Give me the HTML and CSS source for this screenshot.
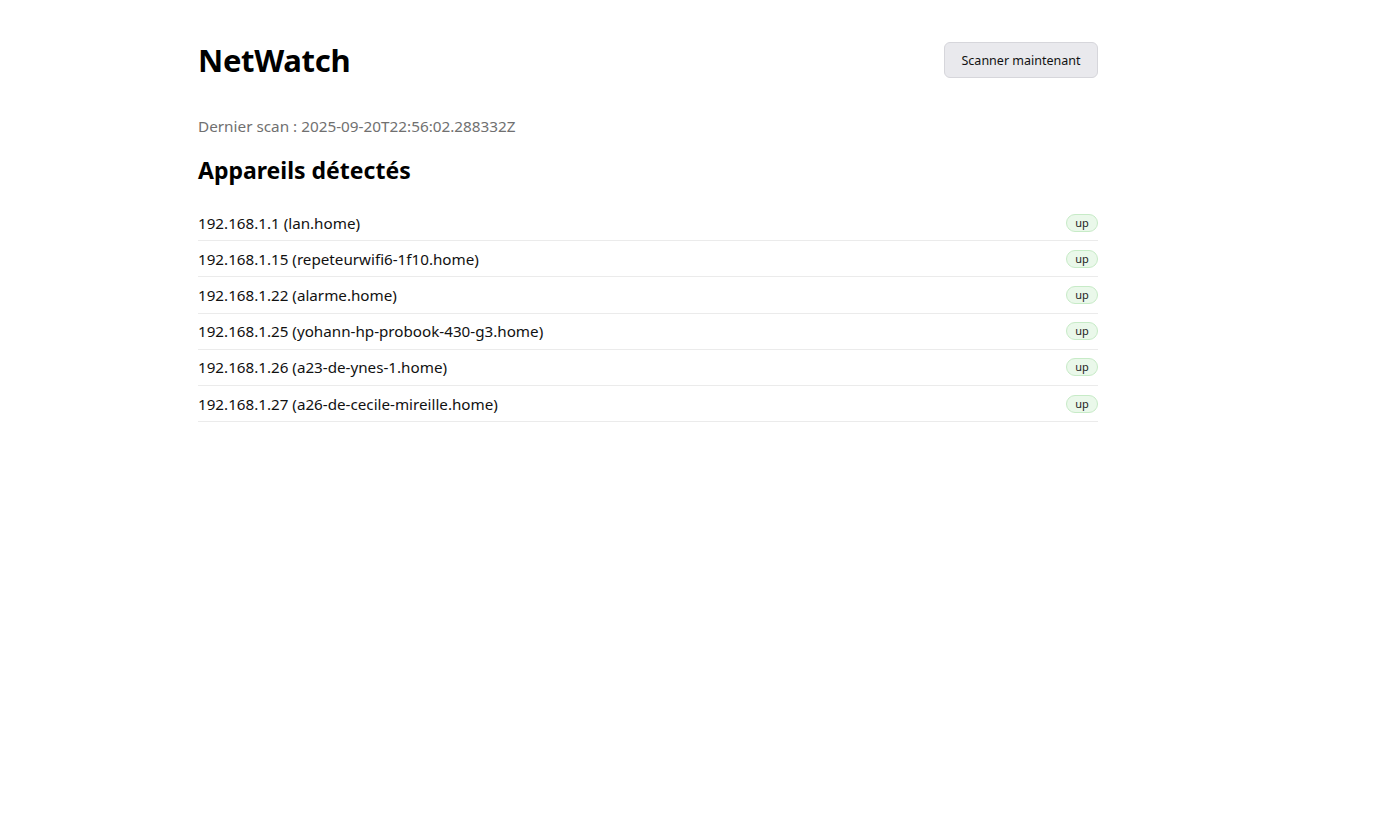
FILE: index.html
```html
<!DOCTYPE html>
<html lang="fr">
<head>
<meta charset="utf-8">
<title>NetWatch</title>
<link rel="stylesheet" href="styles.css">
</head>
<body>
<main class="wrap">
  <header class="top">
    <h1 class="title">NetWatch</h1>
    <button class="scan-btn">Scanner maintenant</button>
  </header>
  <p class="last-scan">Dernier scan : 2025-09-20T22:56:02.288332Z</p>
  <h2 class="subtitle">Appareils détectés</h2>
  <ul class="devices">
    <li class="device"><span>192.168.1.1 (lan.home)</span><span class="badge">up</span></li>
    <li class="device"><span>192.168.1.15 (repeteurwifi6-1f10.home)</span><span class="badge">up</span></li>
    <li class="device"><span>192.168.1.22 (alarme.home)</span><span class="badge">up</span></li>
    <li class="device"><span>192.168.1.25 (yohann-hp-probook-430-g3.home)</span><span class="badge">up</span></li>
    <li class="device"><span>192.168.1.26 (a23-de-ynes-1.home)</span><span class="badge">up</span></li>
    <li class="device"><span>192.168.1.27 (a26-de-cecile-mireille.home)</span><span class="badge">up</span></li>
  </ul>
</main>
</body>
</html>
```
FILE: styles.css
```css
html, body {
  margin: 0;
  padding: 0;
  background: #fff;
}
body {
  font-family: "Noto Sans", "Open Sans", sans-serif;
  color: #111;
}
.wrap {
  width: 900px;
  margin-left: 198px;
  padding-top: 42px;
}
.top {
  display: flex;
  justify-content: space-between;
  align-items: center;
  height: 36px;
}
.title {
  margin: 0;
  font-size: 31px;
  font-weight: 700;
  letter-spacing: -0.3px;
  color: #000;
}
.scan-btn {
  height: 36px;
  width: 154px;
  padding: 0;
  border: 1px solid #d6d6db;
  border-radius: 6px;
  background: #e9e9ed;
  font-family: inherit;
  font-size: 12.5px;
  color: #111;
}
.last-scan {
  margin: 38px 0 0;
  font-size: 15.3px;
  color: #707070;
  line-height: 20px;
}
.subtitle {
  margin: 19px 0 0;
  font-size: 23px;
  font-weight: 700;
  color: #000;
  line-height: 30px;
}
.devices {
  list-style: none;
  margin: 20px 0 0;
  padding: 0;
}
.device {
  display: flex;
  justify-content: space-between;
  align-items: center;
  height: 35.2px;
  border-bottom: 1px solid #ebebeb;
  font-size: 15.2px;
  color: #111;
}
.badge {
  display: inline-block;
  box-sizing: border-box;
  width: 32px;
  height: 18px;
  line-height: 16px;
  text-align: center;
  border: 1px solid #c7ebc7;
  border-radius: 9px;
  background: #eaf8ea;
  font-size: 11px;
  color: #222;
}
```
